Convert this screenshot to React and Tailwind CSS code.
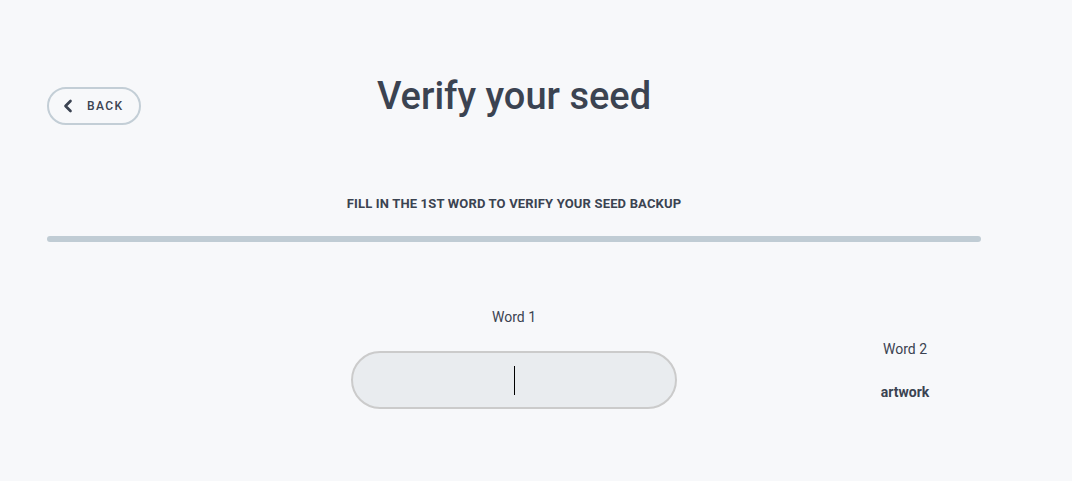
import { ChevronLeft } from 'lucide-react';

const font = { fontFamily: 'Roboto, "Liberation Sans", sans-serif' };

export default function App() {
  return (
    <div className="min-h-[481px] w-full bg-[#f7f8fa] text-[#3b4351]" style={font}>
      <div className="ml-[47px] w-[934px] pt-[75px]">
        {/* Header */}
        <div className="relative flex h-[42px] items-center justify-center">
          <button className="absolute left-0 top-[12px] flex h-[38px] w-[94px] items-center gap-[9px] rounded-full border-2 border-[#c3ced6] pl-[9px] text-[12px] font-medium tracking-[0.12em] text-[#3b4351]">
            <ChevronLeft className="h-[20px] w-[20px]" strokeWidth={3.2} />
            BACK
          </button>
          <h1 className="text-[38px] font-medium leading-[42px] text-[#3b4351]">Verify your seed</h1>
        </div>

        <p className="mt-[80px] text-center text-[13px] font-bold leading-[14px] tracking-[0.013em] text-[#3b4351]">
          FILL IN THE 1ST WORD TO VERIFY YOUR SEED BACKUP
        </p>

        <div className="mt-[25px] h-[6px] w-full rounded-full bg-[#c0ccd4]" />

        {/* Words */}
        <div className="mt-[66px] flex">
          <div className="ml-[304px] flex w-[326px] flex-col items-center">
            <span className="text-[14px] leading-[18px] text-[#3b4351]">Word 1</span>
            <div className="mt-[25px] flex h-[58px] w-full items-center justify-center rounded-full border-2 border-[#cbcbcb] bg-[#e9ecef]">
              <span className="h-[29px] w-px bg-black" />
            </div>
          </div>
          <div className="ml-[188px] mt-[32px] flex w-[80px] flex-col items-center">
            <span className="text-[14px] leading-[18px] text-[#3b4351]">Word 2</span>
            <span className="mt-[25px] text-[14px] font-bold leading-[18px] text-[#3b4351]">artwork</span>
          </div>
        </div>
      </div>
    </div>
  );
}
